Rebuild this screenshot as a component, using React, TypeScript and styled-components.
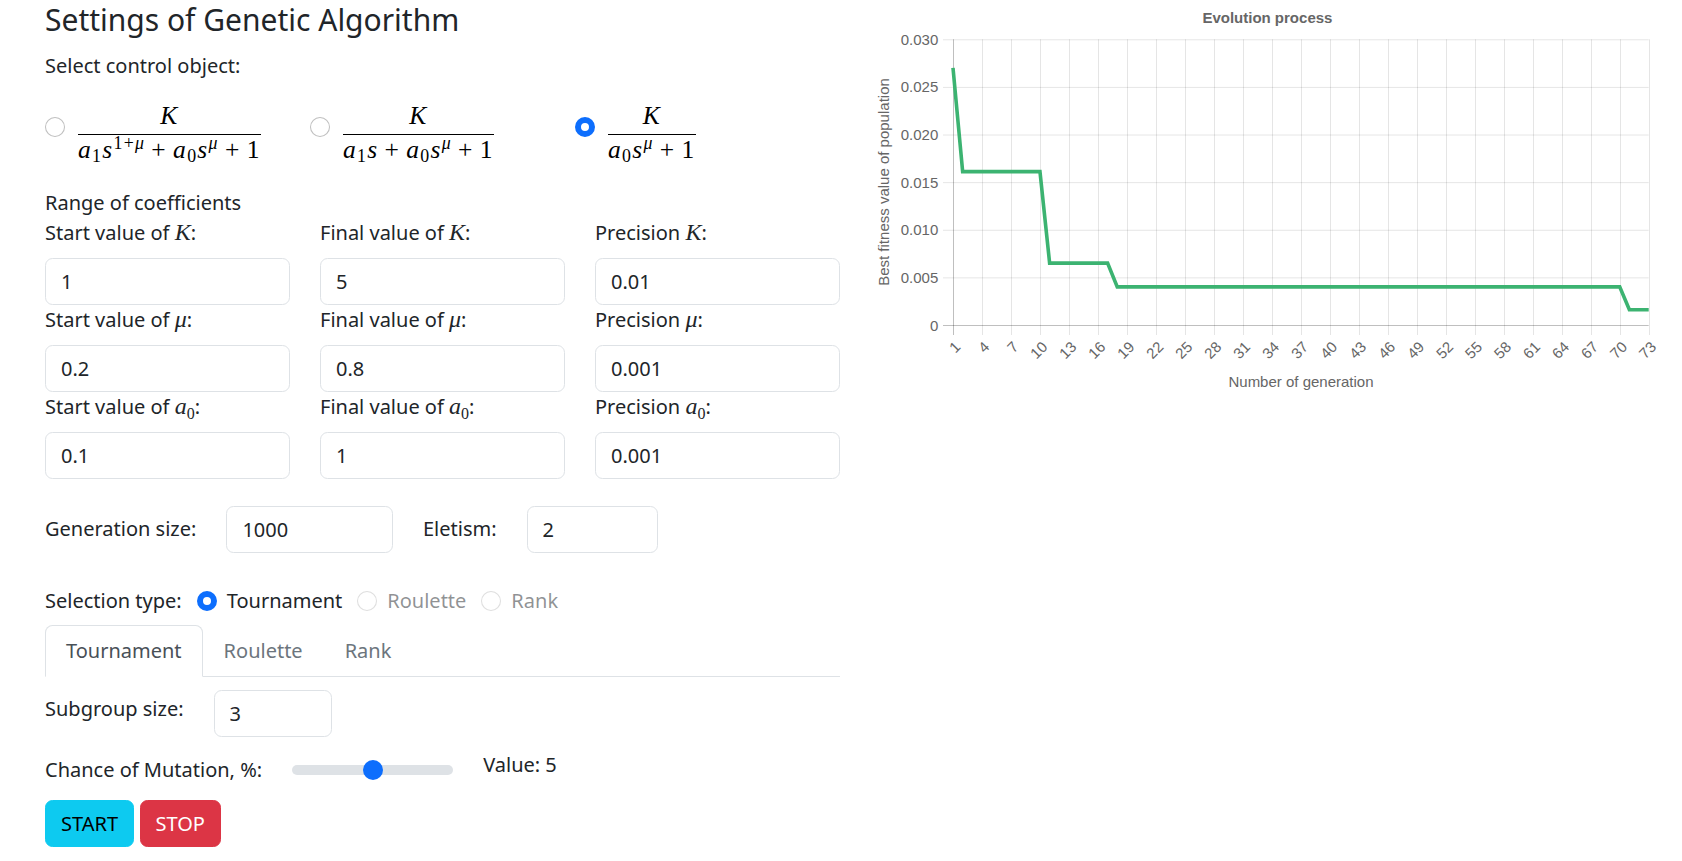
import React from "react";
import styled, { createGlobalStyle } from "styled-components";

const GlobalStyle = createGlobalStyle`
  *, *::before, *::after { box-sizing: border-box; }
  html, body { margin: 0; padding: 0; background: #fff; }
  body {
    font-family: "Noto Sans", sans-serif;
    font-size: 20px;
    line-height: 1.5;
    color: #212529;
  }
`;

const Page = styled.div`
  display: flex;
  align-items: flex-start;
  gap: 20px;
  padding-left: 45px;
`;

const LeftPanel = styled.div`
  flex: none;
  width: 795px;
  display: flex;
  flex-direction: column;
`;

const Title = styled.h4`
  margin: 2px 0 13px;
  font-size: 30px;
  font-weight: 400;
  line-height: 36px;
`;

const Text = styled.div`
  line-height: 30px;
`;

const ObjectRow = styled.div`
  display: grid;
  grid-template-columns: repeat(3, 265px);
  margin: 22px 0 25.5px;
`;

const ObjectOption = styled.label`
  display: flex;
  align-items: center;
`;

const Radio = styled.span<{ $checked?: boolean; $disabled?: boolean; $lift?: number }>`
  flex: none;
  width: 20px;
  height: 20px;
  border-radius: 50%;
  border: ${(p) => (p.$checked ? "6px solid #0d6efd" : "1px solid rgba(0,0,0,0.25)")};
  background: #fff;
  opacity: ${(p) => (p.$disabled ? 0.5 : 1)};
  margin-right: 10px;
  margin-bottom: ${(p) => p.$lift ?? 0}px;
`;

const Frac = styled.span`
  display: inline-flex;
  flex-direction: column;
  align-items: center;
  padding: 0 3px;
  font-family: "Liberation Serif", serif;
  font-size: 25.5px;
  line-height: 1;
  letter-spacing: 0.05em;
  color: #000;
`;

const Num = styled.span`
  padding-bottom: 5px;
`;

const Bar = styled.span`
  align-self: stretch;
  height: 1px;
  background: #000;
`;

const Den = styled.span`
  padding-top: 2px;
  white-space: nowrap;
`;

const I = styled.i`
  font-style: italic;
`;

const Sub = styled.span`
  font-size: 0.7em;
  line-height: 0;
  vertical-align: -0.22em;
`;

const Sup = styled.span`
  font-size: 0.7em;
  line-height: 0;
  vertical-align: 0.48em;
`;

const Op = styled.span`
  margin: 0 0.24em;
`;

const MathVar = styled.i`
  font-family: "Liberation Serif", serif;
  font-size: 24px;
  font-style: italic;
  line-height: 0;
`;

const MathSub = styled.span`
  font-family: "Liberation Serif", serif;
  font-size: 16px;
  line-height: 0;
  vertical-align: -0.3em;
`;

const CoefGrid = styled.div`
  display: grid;
  grid-template-columns: repeat(3, 245px);
  column-gap: 30px;
`;

const Field = styled.div`
  display: flex;
  flex-direction: column;
`;

const FieldLabel = styled.label`
  line-height: 30px;
  margin-bottom: 10.5px;
`;

const Input = styled.input<{ $w?: number; $h?: number }>`
  width: ${(p) => (p.$w ? `${p.$w}px` : "100%")};
  height: ${(p) => p.$h ?? 46.5}px;
  padding: 0 15px;
  border: 1px solid #dee2e6;
  border-radius: 7.5px;
  font: inherit;
  color: #212529;
  background: #fff;
  outline: none;
`;

const InlineRow = styled.div<{ $mt: number; $align?: string }>`
  display: flex;
  align-items: ${(p) => p.$align ?? "center"};
  gap: 30px;
  margin-top: ${(p) => p.$mt}px;
`;

const RowLabel = styled.label<{ $mt?: number }>`
  line-height: 30px;
  margin-top: ${(p) => p.$mt ?? 0}px;
`;

const SelectionRow = styled.div`
  display: flex;
  align-items: center;
  margin-top: 33px;
  line-height: 30px;
`;

const Check = styled.label<{ $disabled?: boolean }>`
  display: flex;
  align-items: center;
  margin-left: 15px;
  color: ${(p) => (p.$disabled ? "rgba(33,37,41,0.5)" : "#212529")};
`;

const TabList = styled.div`
  display: flex;
  margin-top: 9px;
  border-bottom: 1px solid #dee2e6;
`;

const Tab = styled.div<{ $active?: boolean }>`
  padding: 10px 20px;
  line-height: 30px;
  margin-bottom: -1px;
  border: 1px solid transparent;
  border-color: ${(p) => (p.$active ? "#dee2e6 #dee2e6 #fff" : "transparent")};
  border-radius: 7.5px 7.5px 0 0;
  background: ${(p) => (p.$active ? "#fff" : "transparent")};
  color: ${(p) => (p.$active ? "#495057" : "#6c757d")};
`;

const ValueText = styled.span`
  line-height: 30px;
  margin-top: -10px;
`;

const Range = styled.input`
  -webkit-appearance: none;
  appearance: none;
  width: 161px;
  height: 20px;
  margin: 0;
  padding: 0;
  background: transparent;
  &::-webkit-slider-runnable-track {
    height: 10px;
    border-radius: 10px;
    background: #dee2e6;
  }
  &::-webkit-slider-thumb {
    -webkit-appearance: none;
    appearance: none;
    width: 20px;
    height: 20px;
    margin-top: -5px;
    border-radius: 50%;
    border: 0;
    background: #0d6efd;
  }
  &::-moz-range-track {
    height: 10px;
    border-radius: 10px;
    background: #dee2e6;
  }
  &::-moz-range-thumb {
    width: 20px;
    height: 20px;
    border-radius: 50%;
    border: 0;
    background: #0d6efd;
  }
`;

const ButtonRow = styled.div`
  display: flex;
  gap: 5.5px;
  margin-top: 15px;
`;

const Button = styled.button<{ $variant: "info" | "danger" }>`
  padding: 7.5px 15px;
  font: inherit;
  line-height: 30px;
  border-radius: 7.5px;
  border: 1px solid ${(p) => (p.$variant === "info" ? "#0dcaf0" : "#dc3545")};
  background: ${(p) => (p.$variant === "info" ? "#0dcaf0" : "#dc3545")};
  color: ${(p) => (p.$variant === "info" ? "#000" : "#fff")};
`;

const ChartBox = styled.div`
  flex: none;
  width: 822px;
  height: 400px;
`;

/* ---------- chart ---------- */
const X0 = 93;
const X1 = 788.7;
const Y0 = 325;
const YTOP = 39.3;
const xs = (g: number) => X0 + ((g - 1) * (X1 - X0)) / 72;
const ys = (v: number) => Y0 - (v / 0.03) * (Y0 - YTOP);
const val = (g: number) =>
  g === 1 ? 0.027 : g <= 10 ? 0.0161 : g <= 17 ? 0.0065 : g <= 70 ? 0.004 : 0.0016;
const gens = Array.from({ length: 73 }, (_, i) => i + 1);
const tickGens = gens.filter((g) => (g - 1) % 3 === 0);
const yTicks = [0, 0.005, 0.01, 0.015, 0.02, 0.025, 0.03];
const yLabel = (v: number) => (v === 0 ? "0" : v.toFixed(3));

function Chart() {
  const pts = gens.map((g) => `${xs(g).toFixed(2)},${ys(val(g)).toFixed(2)}`).join(" ");
  const font = { fontFamily: "'Liberation Sans', Arial, sans-serif", fontSize: 15, fill: "#666" };
  return (
    <svg width="822" height="400" viewBox="0 0 822 400">
      <text x={407.4} y={17.2} textAnchor="middle" dominantBaseline="central" {...font} fontWeight="bold">
        Evolution process
      </text>
      {yTicks.map((v) => (
        <g key={v}>
          <line
            x1={X0 - 10}
            x2={X1}
            y1={ys(v) + 0.5}
            y2={ys(v) + 0.5}
            stroke={v === 0 ? "rgba(0,0,0,0.25)" : "rgba(0,0,0,0.1)"}
            strokeWidth={1}
          />
          <text x={78.3} y={ys(v)} textAnchor="end" dominantBaseline="central" {...font}>
            {yLabel(v)}
          </text>
        </g>
      ))}
      {tickGens.map((g) => (
        <g key={g}>
          <line
            x1={Math.round(xs(g)) + 0.5}
            x2={Math.round(xs(g)) + 0.5}
            y1={YTOP}
            y2={Y0 + 10}
            stroke={g === 1 ? "rgba(0,0,0,0.25)" : "rgba(0,0,0,0.1)"}
            strokeWidth={1}
          />
          <text
            transform={`translate(${xs(g) + 4.5},${344}) rotate(-45)`}
            textAnchor="end"
            dominantBaseline="central"
            {...font}
          >
            {g}
          </text>
        </g>
      ))}
      <polyline points={pts} fill="none" stroke="#3cb371" strokeWidth={3.6} strokeLinejoin="miter" />
      <text
        transform="translate(23,182) rotate(-90)"
        textAnchor="middle"
        dominantBaseline="central"
        {...font}
      >
        Best fitness value of population
      </text>
      <text x={441} y={381} textAnchor="middle" dominantBaseline="central" {...font}>
        Number of generation
      </text>
    </svg>
  );
}

export default function App() {
  return (
    <>
      <GlobalStyle />
      <Page>
        <LeftPanel>
          <Title>Settings of Genetic Algorithm</Title>
          <Text>Select control object:</Text>
          <ObjectRow>
            <ObjectOption>
              <Radio $lift={11} />
              <Frac>
                <Num>
                  <I>K</I>
                </Num>
                <Bar />
                <Den>
                  <I>a</I>
                  <Sub>1</Sub>
                  <I>s</I>
                  <Sup>
                    1+<I>μ</I>
                  </Sup>
                  <Op>+</Op>
                  <I>a</I>
                  <Sub>0</Sub>
                  <I>s</I>
                  <Sup>
                    <I>μ</I>
                  </Sup>
                  <Op>+</Op>1
                </Den>
              </Frac>
            </ObjectOption>
            <ObjectOption>
              <Radio $lift={11} />
              <Frac>
                <Num>
                  <I>K</I>
                </Num>
                <Bar />
                <Den>
                  <I>a</I>
                  <Sub>1</Sub>
                  <I>s</I>
                  <Op>+</Op>
                  <I>a</I>
                  <Sub>0</Sub>
                  <I>s</I>
                  <Sup>
                    <I>μ</I>
                  </Sup>
                  <Op>+</Op>1
                </Den>
              </Frac>
            </ObjectOption>
            <ObjectOption>
              <Radio $lift={11} $checked />
              <Frac>
                <Num>
                  <I>K</I>
                </Num>
                <Bar />
                <Den>
                  <I>a</I>
                  <Sub>0</Sub>
                  <I>s</I>
                  <Sup>
                    <I>μ</I>
                  </Sup>
                  <Op>+</Op>1
                </Den>
              </Frac>
            </ObjectOption>
          </ObjectRow>
          <Text>Range of coefficients</Text>
          <CoefGrid>
            <Field>
              <FieldLabel>
                Start value of <MathVar>K</MathVar>:
              </FieldLabel>
              <Input defaultValue="1" />
            </Field>
            <Field>
              <FieldLabel>
                Final value of <MathVar>K</MathVar>:
              </FieldLabel>
              <Input defaultValue="5" />
            </Field>
            <Field>
              <FieldLabel>
                Precision <MathVar>K</MathVar>:
              </FieldLabel>
              <Input defaultValue="0.01" />
            </Field>
            <Field>
              <FieldLabel>
                Start value of <MathVar>μ</MathVar>:
              </FieldLabel>
              <Input defaultValue="0.2" />
            </Field>
            <Field>
              <FieldLabel>
                Final value of <MathVar>μ</MathVar>:
              </FieldLabel>
              <Input defaultValue="0.8" />
            </Field>
            <Field>
              <FieldLabel>
                Precision <MathVar>μ</MathVar>:
              </FieldLabel>
              <Input defaultValue="0.001" />
            </Field>
            <Field>
              <FieldLabel>
                Start value of <MathVar>a</MathVar>
                <MathSub>0</MathSub>:
              </FieldLabel>
              <Input defaultValue="0.1" />
            </Field>
            <Field>
              <FieldLabel>
                Final value of <MathVar>a</MathVar>
                <MathSub>0</MathSub>:
              </FieldLabel>
              <Input defaultValue="1" />
            </Field>
            <Field>
              <FieldLabel>
                Precision <MathVar>a</MathVar>
                <MathSub>0</MathSub>:
              </FieldLabel>
              <Input defaultValue="0.001" />
            </Field>
          </CoefGrid>
          <InlineRow $mt={27}>
            <RowLabel>Generation size:</RowLabel>
            <Input $w={166.6} $h={47.5} defaultValue="1000" />
            <RowLabel>Eletism:</RowLabel>
            <Input $w={131} $h={47.5} defaultValue="2" />
          </InlineRow>
          <SelectionRow>
            <span>Selection type:</span>
            <Check>
              <Radio $checked />
              Tournament
            </Check>
            <Check $disabled>
              <Radio $disabled />
              Roulette
            </Check>
            <Check $disabled>
              <Radio $disabled />
              Rank
            </Check>
          </SelectionRow>
          <TabList>
            <Tab $active>Tournament</Tab>
            <Tab>Roulette</Tab>
            <Tab>Rank</Tab>
          </TabList>
          <InlineRow $mt={13} $align="flex-start">
            <RowLabel $mt={4}>Subgroup size:</RowLabel>
            <Input $w={118} $h={47} defaultValue="3" />
          </InlineRow>
          <InlineRow $mt={18}>
            <RowLabel>Chance of Mutation, %:</RowLabel>
            <Range type="range" min={0} max={10} defaultValue={5} />
            <ValueText>Value: 5</ValueText>
          </InlineRow>
          <ButtonRow>
            <Button $variant="info">START</Button>
            <Button $variant="danger">STOP</Button>
          </ButtonRow>
        </LeftPanel>
        <ChartBox>
          <Chart />
        </ChartBox>
      </Page>
    </>
  );
}
